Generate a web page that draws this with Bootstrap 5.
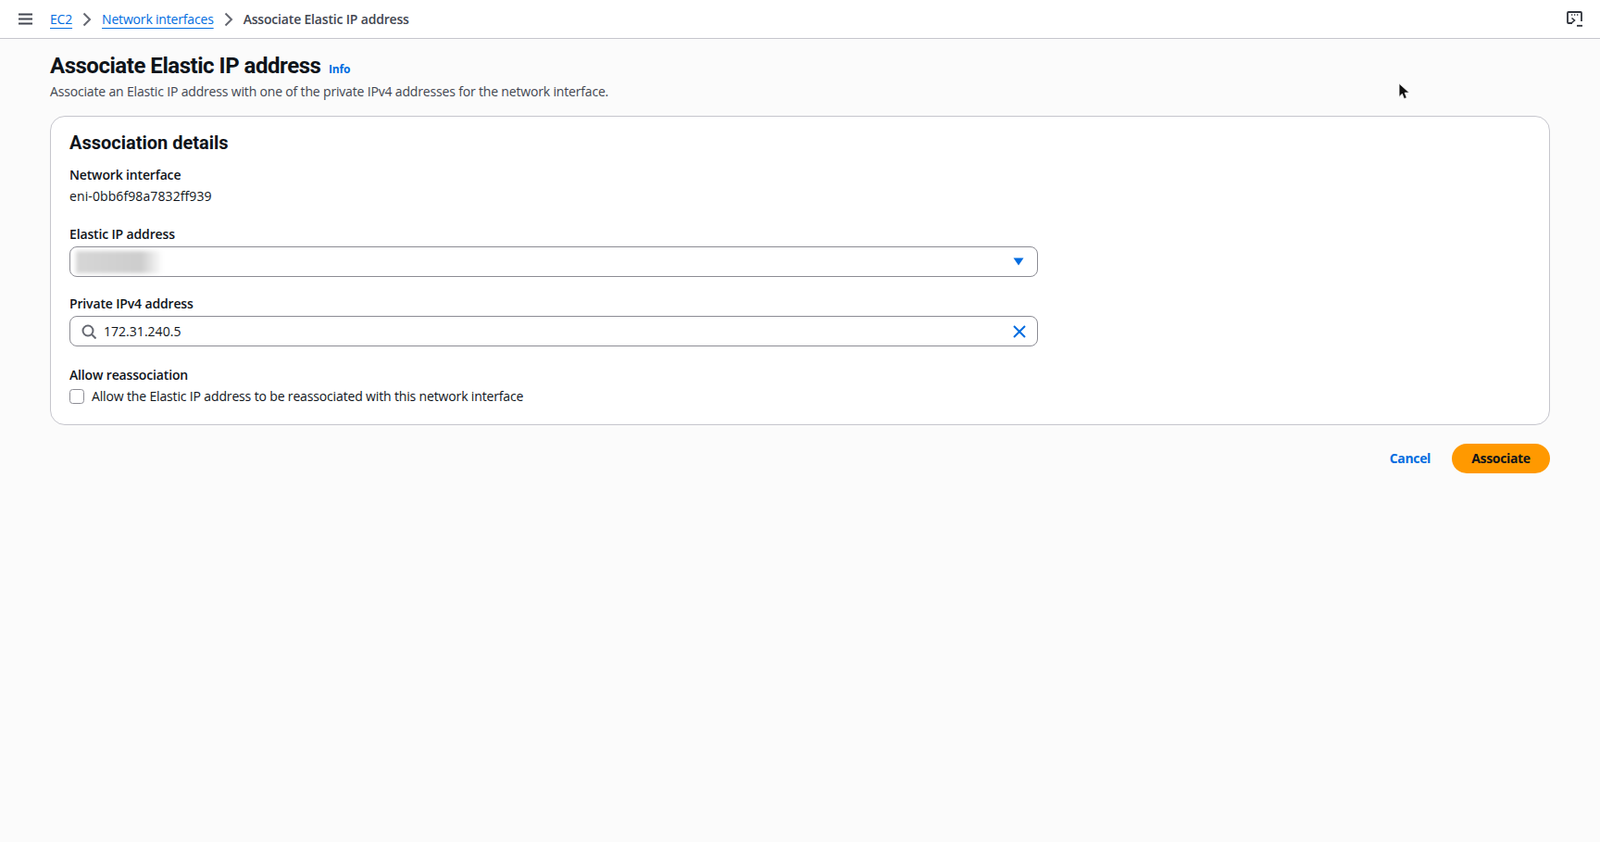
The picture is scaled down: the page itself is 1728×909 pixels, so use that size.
<!DOCTYPE html>
<html lang="en">
<head>
    <meta charset="UTF-8">
    <title>Associate Elastic IP address</title>
    <link href="https://cdn.jsdelivr.net/npm/bootstrap@5.3.0/dist/css/bootstrap.min.css" rel="stylesheet">
    <style>
        body { background: #fbfbfb; color: #0f141a; font-family: "Open Sans", "Liberation Sans", sans-serif; font-size: 14px; line-height: 20px; min-height: 909px; position: relative; letter-spacing: -.15px; }
        .top-bar { height: 42px; background: #fff; border-bottom: 1px solid #c6c6cd; padding: 0 19px 0 20px; }
        .crumbs { --bs-breadcrumb-margin-bottom: 0; margin-left: 19px; gap: 11px; }
        .crumbs .breadcrumb-item { padding: 0; display: flex; align-items: center; gap: 11px; color: #424650; font-weight: 600; letter-spacing: -.18px; }
        .crumbs .breadcrumb-item::before { display: none; }
        .crumbs a { color: #006ce0; font-weight: 400; text-underline-offset: 4px; }
        .page-body { padding: 0 54px 0 54px; }
        .page-title { font-family: Roboto, "Liberation Sans", sans-serif; font-size: 24px; line-height: 30px; font-weight: 700; margin: 14px 0 0; letter-spacing: -.47px; }
        .info-link { font-family: "Open Sans", sans-serif; font-size: 12px; font-weight: 700; color: #006ce0; text-decoration: none; margin-left: 3px; letter-spacing: -.1px; }
        .page-sub { color: #424650; margin: -1px 0 16px; height: 20px; letter-spacing: -.17px; }
        .detail-box { height: 334px; background: #fff; border: 1px solid #c6c6cd; border-radius: 16px; padding: 15px 20px 16px; }
        .detail-box h2 { font-family: Roboto, "Liberation Sans", sans-serif; font-size: 20px; line-height: 26px; font-weight: 700; margin: 0 0 11px; letter-spacing: 0; }
        .field-label { font-weight: 600; display: block; padding-top: 1px; margin: 0 0 3px; }
        .field-gap { margin-bottom: 20px; }
        .field-shell { width: 1046px; height: 33px; border: 1px solid #8c8c94; border-radius: 8px; padding: 0 14px 0 6px; background: #fff; }
        .blur-value { width: 94px; height: 24px; background: linear-gradient(to right, #d6d6d6 0, #cdcdcd 75%, #fff 100%); filter: blur(2px); }
        .search-shell { padding-left: 12px; padding-right: 12px; gap: 8px; }
        .tight-field { margin-bottom: 18px; }
        .mono-ish { letter-spacing: .1px; }
        .ip-input { border: 0; padding: 0; height: 28px; font-size: 14px; color: #0f141a; box-shadow: none; background: transparent; letter-spacing: .03px; }
        .check-mark { width: 16px; height: 16px; margin: 0; border: 1px solid #8c8c94; border-radius: 4px; flex: none; }
        .action-row { gap: 23px; margin-top: 20px; }
        .cancel-link { color: #006ce0; font-weight: 700; text-decoration: none; letter-spacing: -.35px; }
        .assoc-btn { background: #ff9900; border: 0; color: #0f141a; font-size: 14px; line-height: 20px; font-weight: 700; width: 106px; height: 32px; padding: 0; border-radius: 16px; letter-spacing: -.35px; }
        .cursor-mark { position: absolute; left: 1510px; top: 89px; }
    </style>
</head>
<body>

<header class="top-bar d-flex align-items-center">
    <svg width="15" height="13" viewBox="0 0 15 13" fill="none" stroke="#424650" stroke-width="2"><path d="M0 1.500h15M0 6.500h15M0 11.500h15"/></svg>
    <nav aria-label="breadcrumb">
        <ol class="breadcrumb crumbs align-items-center">
            <li class="breadcrumb-item"><a href="#">EC2</a></li>
            <li class="breadcrumb-item">
                <svg width="10" height="16" viewBox="0 0 10 16" fill="none" stroke="#656871" stroke-width="2"><path d="M1.500 1.500 8 8l-6.500 6.500"/></svg>
                <a href="#">Network interfaces</a>
            </li>
            <li class="breadcrumb-item active">
                <svg width="10" height="16" viewBox="0 0 10 16" fill="none" stroke="#656871" stroke-width="2"><path d="M1.500 1.500 8 8l-6.500 6.500"/></svg>
                Associate Elastic IP address
            </li>
        </ol>
    </nav>
    <svg class="ms-auto" width="17" height="17" viewBox="0 0 17 17" fill="none" stroke="#2f333b" stroke-width="1.800">
        <path d="M6 13H2a1 1 0 0 1-1-1V2a1 1 0 0 1 1-1h13a1 1 0 0 1 1 1v9"/>
        <path d="M5.500 7.500l3 2.500-3 2.500" stroke-width="1.600"/>
        <path d="M11 15.800h6" stroke-width="1.800"/>
        <path d="M5 4h1.300M8 4h1.300M11 4h1.300" stroke-width="1.400"/>
    </svg>
</header>

<main class="page-body">
    <h1 class="page-title">Associate Elastic IP address <a href="#" class="info-link">Info</a></h1>
    <p class="page-sub">Associate an Elastic IP address with one of the private IPv4 addresses for the network interface.</p>

    <section class="detail-box">
        <h2>Association details</h2>
        <div class="field-gap">
            <span class="field-label">Network interface</span>
            <div class="mono-ish">eni-0bb6f98a7832ff939</div>
        </div>
        <div class="tight-field">
            <span class="field-label">Elastic IP address</span>
            <div class="field-shell d-flex align-items-center justify-content-between">
                <div class="blur-value"></div>
                <svg width="12" height="9" viewBox="0 0 12 9" fill="#006ce0"><path d="M.5.500h11L6 8.500z"/></svg>
            </div>
        </div>
        <div class="field-gap">
            <label class="field-label" for="ipv4">Private IPv4 address</label>
            <div class="field-shell search-shell d-flex align-items-center">
                <svg class="flex-shrink-0" width="16" height="16" viewBox="0 0 16 16" fill="none" stroke="#656871" stroke-width="2"><circle cx="7" cy="7" r="5.500"/><path d="M11 11l4.500 4.500"/></svg>
                <input id="ipv4" class="form-control ip-input" value="172.31.240.5">
                <svg class="flex-shrink-0" width="14" height="14" viewBox="0 0 14 14" fill="none" stroke="#006ce0" stroke-width="2"><path d="M1 1l12 12M13 1 1 13"/></svg>
            </div>
        </div>
        <div>
            <span class="field-label">Allow reassociation</span>
            <div class="d-flex align-items-center gap-2">
                <input id="reassoc" class="form-check-input check-mark" type="checkbox">
                <label for="reassoc">Allow the Elastic IP address to be reassociated with this network interface</label>
            </div>
        </div>
    </section>

    <div class="action-row d-flex justify-content-end align-items-center">
        <a href="#" class="cancel-link">Cancel</a>
        <button type="button" class="btn assoc-btn">Associate</button>
    </div>
</main>

<svg class="cursor-mark" width="13" height="20" viewBox="0 0 12 18" fill="#111" stroke="#fff" stroke-width=".6"><path d="M1 1v13l3-3 2 5 2.500-1-2-5H11z"/></svg>

</body>
</html>
